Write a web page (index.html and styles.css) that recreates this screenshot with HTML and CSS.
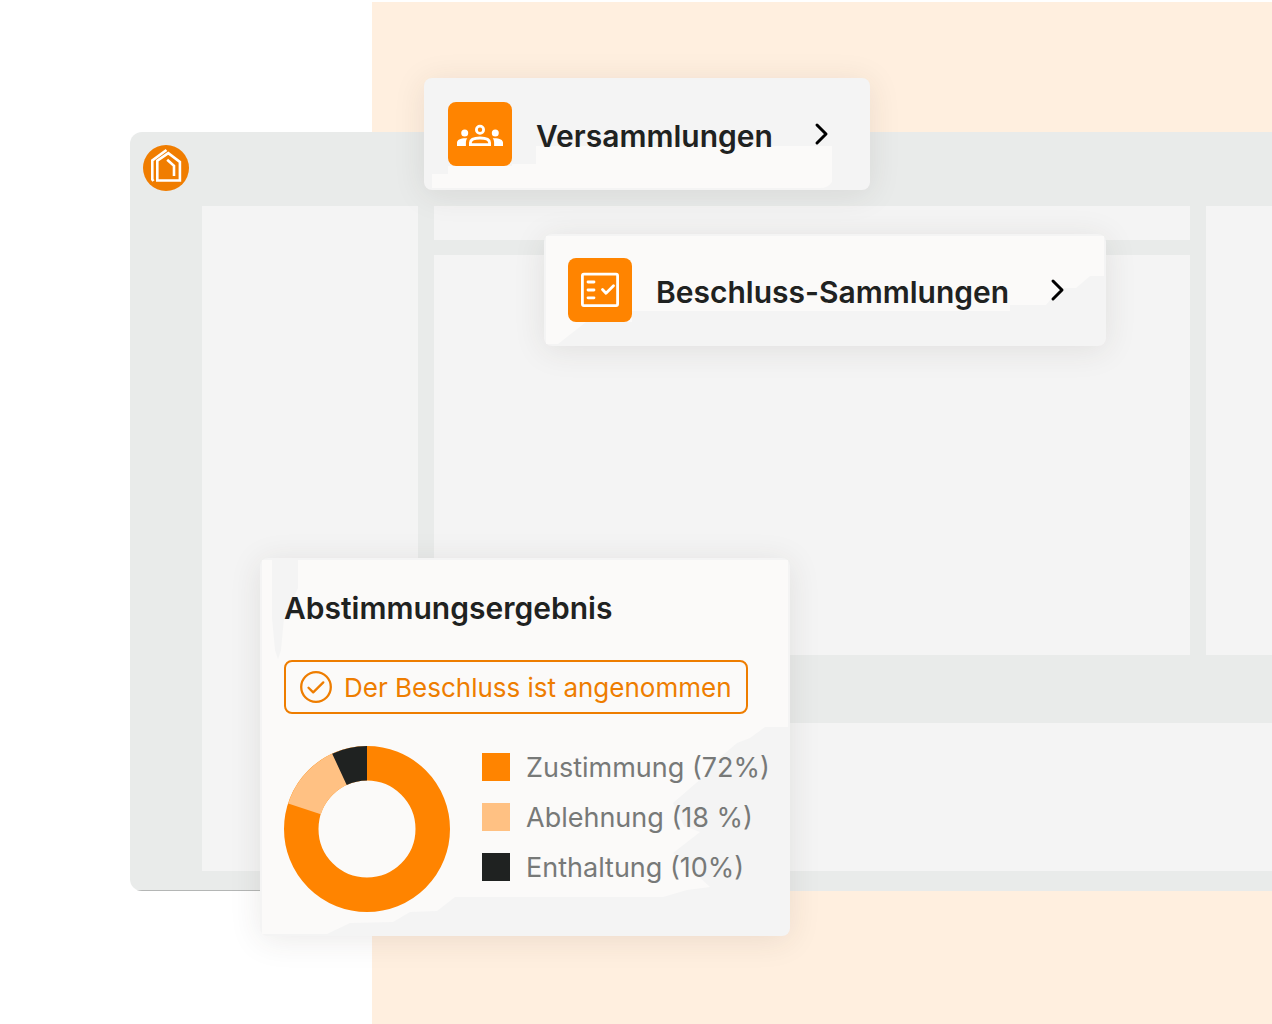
FILE: index.html
```html
<!DOCTYPE html>
<html lang="de">
<head>
<meta charset="utf-8">
<meta name="viewport" content="width=device-width, initial-scale=1">
<title>Versammlungen und Beschlüsse</title>
<link rel="stylesheet" href="styles.css">
</head>
<body>
<main class="stage">
  <div class="window">
    <svg class="logo" viewBox="0 0 46 46" aria-hidden="true">
      <circle cx="23" cy="23" r="23" fill="#f07d00"/>
      <g fill="none" stroke="#fff" stroke-width="2.6">
        <path d="M23.5 5 9.3 15.5V34.5L10.5 36"/>
        <path d="M14.3 35.5V15.8L25.3 8.2 36.9 17V35.5Z"/>
        <path d="M24.2 14.8 31 20.8V31"/>
      </g>
    </svg>
    <div class="pane pane-side"></div>
    <div class="pane pane-head"></div>
    <div class="pane pane-main"></div>
    <div class="pane pane-right"></div>
    <div class="pane pane-foot"></div>
  </div>

  <button class="card link-card meetings" type="button">
    <svg class="sheen" viewBox="0 0 446 112" preserveAspectRatio="none" aria-hidden="true">
      <path d="M8 96H24V88H88V86H112V68H408V104Q404 110 396 110H8Z"/>
    </svg>
    <svg class="tile" viewBox="0 0 64 64" aria-hidden="true">
      <rect width="64" height="64" rx="8" fill="#ff8400"/>
      <g fill="#fff">
        <circle cx="16.7" cy="31" r="3.5"/>
        <circle cx="47.3" cy="31" r="3.5"/>
        <path d="M9 44V40.8C9 37.6 12.6 35.9 19.3 36.2 18.2 37.7 17.9 39 17.9 41V44Z"/>
        <path d="M55 44V40.8C55 37.6 51.4 35.9 44.7 36.2 45.8 37.7 46.1 39 46.1 41V44Z"/>
      </g>
      <g fill="none" stroke="#fff" stroke-width="2.8">
        <circle cx="32" cy="27.8" r="3.6"/>
        <path d="M22.4 42.6V40.8C22.4 37.8 26.2 36 32 36S41.6 37.8 41.6 40.8V42.6Z"/>
      </g>
    </svg>
    <span class="title">Versammlungen</span>
    <svg class="chevron" viewBox="0 0 24 24" aria-hidden="true"><path d="M7 3 16 12 7 21"/></svg>
  </button>

  <button class="card link-card resolutions" type="button">
    <svg class="sheen" viewBox="0 0 562 112" preserveAspectRatio="none" aria-hidden="true">
      <path d="M2 2H560V42H546L532 54H516L502 71H466V77H88V88H42L14 110H2Z"/>
    </svg>
    <svg class="tile" viewBox="0 0 64 64" aria-hidden="true">
      <rect width="64" height="64" rx="8" fill="#ff8400"/>
      <g fill="none" stroke="#fff" stroke-width="2.8" stroke-linecap="round" stroke-linejoin="round">
        <rect x="14.4" y="16.2" width="35.2" height="31.4" rx="1.5"/>
        <path d="M20 24H26M20 32H26M20 39.8H26M34.5 31.5 38 35.3 45.5 27.8"/>
      </g>
    </svg>
    <span class="title">Beschluss-Sammlungen</span>
    <svg class="chevron" viewBox="0 0 24 24" aria-hidden="true"><path d="M7 3 16 12 7 21"/></svg>
  </button>

  <section class="card result" aria-labelledby="result-title">
    <svg class="sheen" viewBox="0 0 530 378" preserveAspectRatio="none" aria-hidden="true">
      <path d="M2 2H12V60L15 92 18 101 21 92 24 60 38 30V2H528V169H505L490 180 477 185 457 202 443 219 413 245 424 268 440 274 413 295 450 329 427 332 403 339H195L177 353 150 354 133 364 90 365 67 376H2Z"/>
    </svg>
    <h2 class="title" id="result-title">Abstimmungsergebnis</h2>
    <p class="badge">
      <svg class="badge-icon" viewBox="0 0 32 32" aria-hidden="true">
        <circle cx="16" cy="16" r="14.8"/><path d="M8.5 16.8 13.2 21.4 23.3 11.4"/>
      </svg>
      <span class="label">Der Beschluss ist angenommen</span>
    </p>
    <div class="chart">
      <svg class="donut" viewBox="0 0 166 166" role="img" aria-label="Abstimmungsergebnis">
        <circle cx="83" cy="83" r="65.75" fill="none" stroke="#ff8400" stroke-width="34.5"/>
        <path fill="#ffc183" d="M83 0A83 83 0 0 0 4.2 57.5L36.8 68.2A48.5 48.5 0 0 1 83 34.5Z"/>
        <path fill="#1f2221" d="M83 0A83 83 0 0 0 48.2 7.7L62.7 39A48.5 48.5 0 0 1 83 34.5Z"/>
      </svg>
      <ul class="legend">
        <li><span class="swatch yes"></span><span class="label">Zustimmung (72%)</span></li>
        <li><span class="swatch no"></span><span class="label">Ablehnung (18 %)</span></li>
        <li><span class="swatch abstain"></span><span class="label">Enthaltung (10%)</span></li>
      </ul>
    </div>
  </section>
</main>
</body>
</html>
```
FILE: styles.css
```css
* { box-sizing: border-box; }

body {
  margin: 0;
  background: #fff;
  color: #1f2221;
  font-family: Inter, "Liberation Sans", sans-serif;
}

.stage {
  position: relative;
  min-height: 100vh;
  padding: 132px 0 132px 130px;
  overflow: hidden;
  background: linear-gradient(#ffefdf, #ffefdf) 372px 2px no-repeat;
}

/* Application frame behind the cards */
.window {
  display: grid;
  grid-template-columns: 72px 216px minmax(0, 1fr) 66px;
  grid-template-rows: 74px 34px 15px 400px 68px 148px;
  grid-template-areas:
    "logo . . ."
    "rail side head right"
    "rail side . right"
    "rail side main right"
    "rail side . ."
    "rail side foot foot";
  padding-bottom: 20px;
  border-radius: 12px 0 0 12px;
  background: linear-gradient(#b4b6b5, #b4b6b5) 0 100% / 200px 1px no-repeat #e9ebea;
}

.logo {
  grid-area: logo;
  width: 46px;
  height: 46px;
  margin: 13px;
}

.pane { background: #f4f4f4; }
.pane-side { grid-area: side; }
.pane-head { grid-area: head; margin: 0 16px; }
.pane-main { grid-area: main; margin: 0 16px; }
.pane-right { grid-area: right; }
.pane-foot { grid-area: foot; margin-left: 16px; }

/* Floating cards */
.card {
  position: absolute;
  padding: 24px;
  border: 0;
  border-radius: 8px;
  background: #f4f4f4;
  box-shadow: 0 4px 32px rgba(60, 50, 40, 0.1);
  color: inherit;
  font-family: inherit;
}

.sheen {
  position: absolute;
  inset: 0;
  width: 100%;
  height: 100%;
  fill: #fbfaf9;
}

.card > :not(.sheen) { position: relative; }

.link-card {
  display: flex;
  align-items: center;
  gap: 24px;
  padding-right: 36px;
  text-align: left;
}

.meetings { top: 78px; left: 424px; width: 446px; }
.resolutions { top: 234px; left: 544px; width: 562px; }
.result { top: 558px; left: 260px; width: 530px; }

.tile { flex: none; width: 64px; height: 64px; }

.title {
  margin: 0;
  font-size: 30px;
  font-weight: 600;
  line-height: 40px;
  white-space: nowrap;
}

.link-card .title { padding-top: 4px; }

.chevron {
  flex: none;
  width: 24px;
  height: 24px;
  margin-left: auto;
  fill: none;
  stroke: #000;
  stroke-width: 3;
  stroke-linecap: round;
  stroke-linejoin: round;
}

.result .title { margin-top: 6px; }

.badge {
  display: flex;
  align-items: center;
  gap: 12px;
  width: 464px;
  height: 54px;
  margin: 32px 0;
  padding: 0 14px;
  border: 2px solid #ee7d00;
  border-radius: 8px;
  color: #ee7d00;
  font-size: 26px;
  line-height: 32px;
  white-space: nowrap;
}

.label { padding-top: 2px; }

.badge-icon {
  flex: none;
  width: 32px;
  height: 32px;
  fill: none;
  stroke: currentColor;
  stroke-width: 2.3;
  stroke-linecap: round;
  stroke-linejoin: round;
}

.chart { display: flex; gap: 32px; align-items: flex-start; }
.donut { flex: none; width: 166px; height: 166px; }

.legend {
  display: grid;
  gap: 16px;
  margin: 4px 0 0;
  padding: 0;
  list-style: none;
  color: #777978;
  font-size: 27px;
  line-height: 32px;
  white-space: nowrap;
}

.legend li { display: flex; align-items: center; gap: 16px; }
.swatch { width: 28px; height: 28px; }
.yes { background: #ff8400; }
.no { background: #ffc183; }
.abstain { background: #1f2221; }
```
